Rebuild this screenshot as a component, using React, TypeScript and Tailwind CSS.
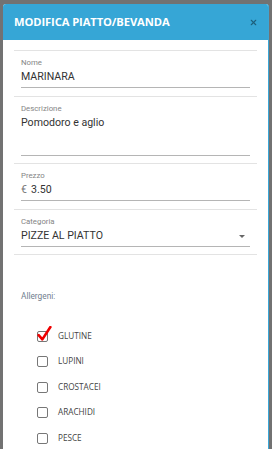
import { X } from 'lucide-react'

const allergeni = [
  { label: 'GLUTINE', checked: true },
  { label: 'LUPINI', checked: false },
  { label: 'CROSTACEI', checked: false },
  { label: 'ARACHIDI', checked: false },
  { label: 'PESCE', checked: false },
]

function Field({ label, children, tall }: { label: string; children: React.ReactNode; tall?: boolean }) {
  return (
    <div className="border-t border-[#e3e3e3] px-[7px] pt-[7px] pb-[7.5px]">
      <p className="text-[7.8px] leading-[10px] text-[#858585]">{label}</p>
      <div
        className={`mt-[2px] flex border-b border-[#b5b5b5] text-[10.6px] leading-[14px] text-[#333] ${
          tall ? 'h-[40px] items-start' : 'h-[18px] items-start'
        }`}
      >
        {children}
      </div>
    </div>
  )
}

export default function App() {
  return (
    <div className="h-[449px] w-[272px] overflow-hidden bg-[#727272] px-[3px] pt-[4px] font-['Roboto',sans-serif]">
      <div className="h-full overflow-hidden rounded-t-[3px] border-r border-[#3aa7d8] bg-white">
        {/* HEADER */}
        <div className="flex h-[36px] items-center justify-between bg-[#36a6d6] pl-[11px] pr-[10px]">
          <h1 className="font-['Open_Sans',sans-serif] text-[11.2px] font-bold tracking-[-0.1px] text-white">
            MODIFICA PIATTO/BEVANDA
          </h1>
          <X size={9} strokeWidth={3} className="text-[#1d5f7c]" />
        </div>

        <div className="mx-[11px] mt-[10px] border-b border-[#e3e3e3]">
          <Field label="Nome">MARINARA</Field>
          <Field label="Descrizione" tall>Pomodoro e aglio</Field>
          <Field label="Prezzo">
            <span className="mr-[4px] text-[#777]">€</span>3.50
          </Field>
          <Field label="Categoria">
            <span className="flex-1">PIZZE AL PIATTO</span>
            <span className="mr-[5px] mt-[6px] h-0 w-0 border-x-[3.5px] border-t-[3.5px] border-x-transparent border-t-[#666]" />
          </Field>
        </div>

        <p className="mt-[35px] pl-[18px] text-[8.3px] leading-[12px] text-[#71808f]">Allergeni:</p>

        <div className="mt-[27.5px] flex flex-col gap-[12.5px] pl-[34px] font-['Open_Sans',sans-serif]">
          {allergeni.map(({ label, checked }) => (
            <div key={label} className="flex h-[13px] items-center gap-[10px]">
              <span className="relative h-[11px] w-[11px] rounded-[2px] border-[1.5px] border-[#777]">
                {checked && (
                  <svg viewBox="0 0 14 14" className="absolute -left-[1px] -top-[6px] h-[15px] w-[15px]">
                    <path
                      d="M1.5 8.5 L5 12.5 L12.5 1"
                      fill="none"
                      stroke="#ee0000"
                      strokeWidth="2.4"
                      strokeLinecap="round"
                      strokeLinejoin="round"
                    />
                  </svg>
                )}
              </span>
              <span className="text-[8.2px] text-[#444]">{label}</span>
            </div>
          ))}
        </div>
      </div>
    </div>
  )
}
